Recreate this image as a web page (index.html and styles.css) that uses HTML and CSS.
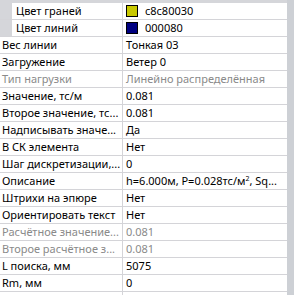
FILE: index.html
```html
<!DOCTYPE html>
<html>
<head>
<meta charset="utf-8">
<link rel="stylesheet" href="styles.css">
</head>
<body>
<div class="panel">
  <div class="grid">
    <div class="row sub">
      <div class="indent"></div>
      <div class="name">Цвет граней</div>
      <div class="value"><span class="swatch yellow"></span>c8c80030</div>
    </div>
    <div class="row sub">
      <div class="indent"></div>
      <div class="name">Цвет линий</div>
      <div class="value"><span class="swatch navy"></span>000080</div>
    </div>
    <div class="row"><div class="name">Вес линии</div><div class="value">Тонкая 03</div></div>
    <div class="row"><div class="name">Загружение</div><div class="value">Ветер 0</div></div>
    <div class="row off"><div class="name">Тип нагрузки</div><div class="value">Линейно распределённая</div></div>
    <div class="row"><div class="name">Значение, тс/м</div><div class="value">0.081</div></div>
    <div class="row"><div class="name">Второе значение, тс...</div><div class="value">0.081</div></div>
    <div class="row"><div class="name">Надписывать значе...</div><div class="value">Да</div></div>
    <div class="row"><div class="name">В СК элемента</div><div class="value">Нет</div></div>
    <div class="row"><div class="name">Шаг дискретизации,...</div><div class="value">0</div></div>
    <div class="row"><div class="name">Описание</div><div class="value">h=6.000м, P=0.028тс/м<sup>2</sup>, Sq...</div></div>
    <div class="row"><div class="name">Штрихи на эпюре</div><div class="value">Нет</div></div>
    <div class="row"><div class="name">Ориентировать текст</div><div class="value">Нет</div></div>
    <div class="row off"><div class="name">Расчётное значение...</div><div class="value">0.081</div></div>
    <div class="row off"><div class="name">Второе расчётное з...</div><div class="value">0.081</div></div>
    <div class="row"><div class="name">L поиска, мм</div><div class="value">5075</div></div>
    <div class="row"><div class="name">Rm, мм</div><div class="value">0</div></div>
    <div class="row"><div class="name"></div><div class="value"></div></div>
  </div>
  <div class="scrollbar"></div>
</div>
</body>
</html>
```

FILE: styles.css
```css
html, body {
  margin: 0;
  padding: 0;
  background: #d5d6da;
}
.panel {
  display: flex;
  width: 294px;
  height: 295px;
  overflow: hidden;
  background: #d5d6da;
}
.grid {
  width: 287px;
  padding-top: 3px;
  display: flex;
  flex-direction: column;
  font-family: "Noto Sans", "Open Sans", sans-serif;
  font-size: 11px;
  color: #000;
}
.row {
  display: flex;
  height: 16px;
  line-height: 16px;
  border-bottom: 1px solid #d4d4d8;
  background: #fff;
  flex-shrink: 0;
}
.row.sub {
  background: transparent;
}
.indent {
  width: 12px;
  flex-shrink: 0;
  background: #d5d6da;
}
.name {
  width: 120px;
  padding-left: 2px;
  border-right: 1px solid #d4d4d8;
  white-space: nowrap;
  overflow: hidden;
  flex-shrink: 0;
  background: #fff;
}
.sub .name {
  width: 106px;
  padding-left: 4px;
}
.value {
  flex: 1;
  padding-left: 3px;
  white-space: nowrap;
  overflow: hidden;
  background: #fff;
  display: flex;
  align-items: center;
}
.value sup {
  font-size: 7px;
  line-height: 7px;
  align-self: flex-start;
  margin-top: 2px;
}
.off {
  color: #8a8a8a;
}
.swatch {
  width: 10px;
  height: 10px;
  border: 1px solid #000;
  margin-right: 7px;
  flex-shrink: 0;
}
.yellow { background: #c8c800; }
.navy { background: #000080; }
.scrollbar {
  width: 7px;
  background: #cdd0d5;
}
```
